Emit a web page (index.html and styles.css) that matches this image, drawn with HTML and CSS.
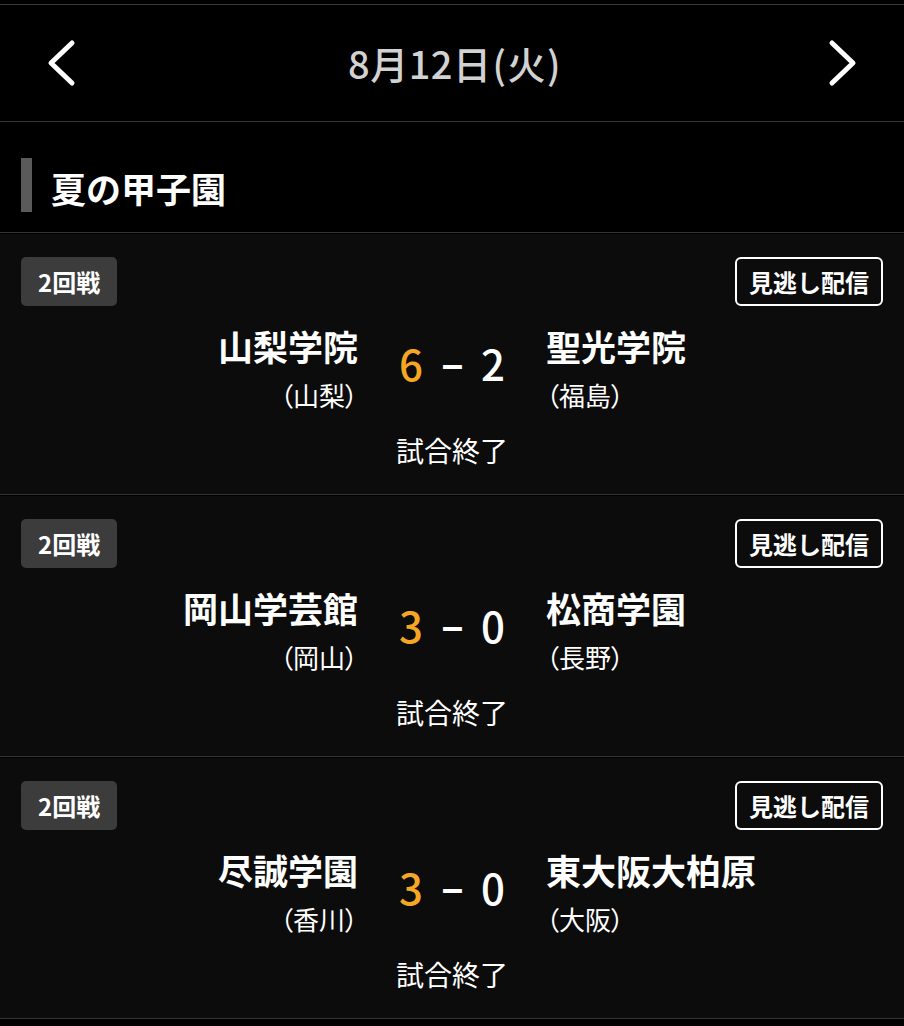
FILE: index.html
```html
<!DOCTYPE html>
<html lang="ja">
<head>
<meta charset="utf-8">
<title>8月12日(火) 夏の甲子園</title>
<link rel="stylesheet" href="styles.css">
</head>
<body>
<div class="page">
  <header class="datebar">
    <button class="nav" aria-label="前の日">
      <svg width="30" height="48" viewBox="0 0 30 48"><path d="M26 4 L5 24 L26 44" fill="none" stroke="#fff" stroke-width="5" stroke-linecap="round" stroke-linejoin="round"/></svg>
    </button>
    <h1 class="date">8月12日<span class="paren">(</span>火<span class="paren">)</span></h1>
    <button class="nav" aria-label="次の日">
      <svg width="30" height="48" viewBox="0 0 30 48"><path d="M4 4 L25 24 L4 44" fill="none" stroke="#fff" stroke-width="5" stroke-linecap="round" stroke-linejoin="round"/></svg>
    </button>
  </header>

  <section class="tournament">
    <h2 class="section-title"><span class="title-text">夏の甲子園</span></h2>
    <ul class="matches">
      <li class="card">
        <div class="card-top">
          <span class="round">2回戦</span>
          <a class="replay" href="#">見逃し配信</a>
        </div>
        <div class="match">
          <div class="team home">
            <div class="team-name">山梨学院</div>
            <div class="pref">（山梨）</div>
          </div>
          <div class="score"><span class="pt win">6</span><span class="dash">–</span><span class="pt">2</span></div>
          <div class="team away">
            <div class="team-name">聖光学院</div>
            <div class="pref">（福島）</div>
          </div>
        </div>
        <div class="status">試合終了</div>
      </li>
      <li class="card">
        <div class="card-top">
          <span class="round">2回戦</span>
          <a class="replay" href="#">見逃し配信</a>
        </div>
        <div class="match">
          <div class="team home">
            <div class="team-name">岡山学芸館</div>
            <div class="pref">（岡山）</div>
          </div>
          <div class="score"><span class="pt win">3</span><span class="dash">–</span><span class="pt">0</span></div>
          <div class="team away">
            <div class="team-name">松商学園</div>
            <div class="pref">（長野）</div>
          </div>
        </div>
        <div class="status">試合終了</div>
      </li>
      <li class="card">
        <div class="card-top">
          <span class="round">2回戦</span>
          <a class="replay" href="#">見逃し配信</a>
        </div>
        <div class="match">
          <div class="team home">
            <div class="team-name">尽誠学園</div>
            <div class="pref">（香川）</div>
          </div>
          <div class="score"><span class="pt win">3</span><span class="dash">–</span><span class="pt">0</span></div>
          <div class="team away">
            <div class="team-name">東大阪大柏原</div>
            <div class="pref">（大阪）</div>
          </div>
        </div>
        <div class="status">試合終了</div>
      </li>
    </ul>
  </section>
</div>
</body>
</html>
```

FILE: styles.css
```css
* { box-sizing: border-box; }

html, body {
  margin: 0;
  padding: 0;
  background: #000;
  color: #fff;
  font-family: "Noto Sans CJK JP", "Noto Sans", sans-serif;
}

.page {
  padding-top: 4px;
}

.datebar {
  display: flex;
  align-items: center;
  justify-content: space-between;
  height: 118px;
  padding: 0 46px;
  border-top: 1px solid #3a3a3a;
  border-bottom: 1px solid #333;
}

.nav {
  display: flex;
  padding: 0;
  margin: 0;
  border: 0;
  background: none;
  width: 30px;
  height: 48px;
}

.date {
  margin: 0;
  font-size: 38px;
  font-weight: 500;
  line-height: 48px;
  color: #d2d2d2;
  letter-spacing: 0.5px;
  padding-left: 6px;
}

.paren {
  padding: 0 1px;
}

.section-title {
  display: flex;
  align-items: center;
  gap: 19px;
  margin: 0;
  padding: 36px 21px 20px;
  border-bottom: 1px solid #333;
}

.section-title::before {
  content: "";
  width: 11px;
  height: 54px;
  background: #5a5a5a;
}

.title-text {
  font-size: 35px;
  font-weight: 700;
  line-height: 48px;
  padding-top: 6px;
}

.matches {
  list-style: none;
  margin: 0;
  padding: 0;
}

.card {
  margin-top: 1px;
  background: #0c0c0c;
  border-bottom: 1px solid #333;
  padding: 23px 21px 26px;
}

.card-top {
  display: flex;
  justify-content: space-between;
  align-items: center;
  height: 49px;
}

.round {
  display: inline-flex;
  align-items: center;
  height: 49px;
  padding: 0 17px;
  background: #3c3c3c;
  border-radius: 5px;
  font-size: 24px;
  font-weight: 700;
}

.replay {
  display: inline-flex;
  align-items: center;
  height: 49px;
  padding: 0 12px;
  border: 2px solid #fff;
  border-radius: 6px;
  color: #fff;
  text-decoration: none;
  font-size: 24px;
  font-weight: 700;
}

.match {
  display: grid;
  grid-template-columns: 1fr 188px 1fr;
  align-items: center;
  margin-top: 18px;
}

.team.home { text-align: right; }
.team.away { text-align: left; }

.team-name {
  font-size: 35px;
  font-weight: 700;
  line-height: 44px;
  white-space: nowrap;
}

.pref {
  margin-top: 12px;
  font-size: 26px;
  line-height: 30px;
  font-feature-settings: "palt";
}

.score {
  display: flex;
  justify-content: center;
  align-items: center;
  gap: 16px;
  margin-bottom: 8px;
  font-size: 42px;
  font-weight: 500;
  line-height: 48px;
}

.pt {
  width: 28px;
  text-align: center;
}

.pt.win { color: #f5a623; }

.dash {
  width: 22px;
  text-align: center;
  font-weight: 700;
  padding-bottom: 4px;
}

.status {
  margin-top: 22px;
  text-align: center;
  font-size: 28px;
  line-height: 36px;
}
```
